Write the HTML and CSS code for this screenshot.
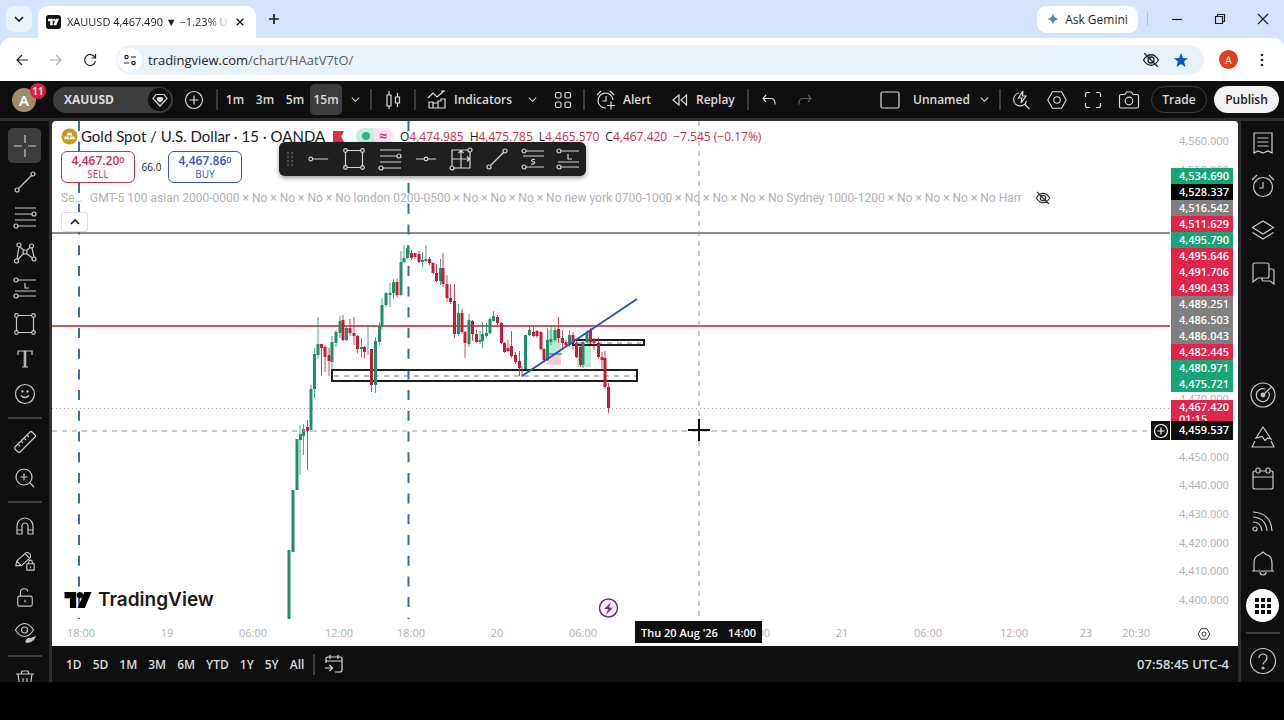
FILE: index.html
```html
<!DOCTYPE html>
<html lang="en">
<head>
<meta charset="utf-8">
<meta name="viewport" content="width=device-width, initial-scale=1">
<title>XAUUSD 4,467.490 ▼ −1.23% Unnamed</title>
<link rel="stylesheet" href="styles.css">
</head>
<body>
<svg class="sprite" aria-hidden="true">
  <symbol id="i-chev" viewBox="0 0 12 12"><path d="M2 4l4 4 4-4"/></symbol>
  <symbol id="i-trend" viewBox="0 0 24 24"><circle cx="4" cy="20" r="2"/><circle cx="20" cy="4" r="2"/><path d="M5.500 18.500L18.500 5.500"/></symbol>
  <symbol id="i-fib" viewBox="0 0 24 24"><path d="M2 3h21M2 9h17M2 15h21M5 21h18"/><circle cx="21" cy="9" r="2"/><circle cx="3" cy="21" r="2"/></symbol>
  <symbol id="i-rect" viewBox="0 0 24 24"><path d="M5 3.500h14M5 20.500h14M3.500 5v14M20.500 5v14"/><circle cx="3.500" cy="3.500" r="1.800"/><circle cx="20.500" cy="3.500" r="1.800"/><circle cx="3.500" cy="20.500" r="1.800"/><circle cx="20.500" cy="20.500" r="1.800"/></symbol>
  <symbol id="i-long" viewBox="0 0 24 24"><path d="M5 4h18M12 7v5h4M2 15h21M5 20h18"/><circle cx="3" cy="4" r="2"/><circle cx="3" cy="20" r="2"/></symbol>
  <symbol id="i-short" viewBox="0 0 24 24"><path d="M5 4h18M2 9h21M5 20h18M14 12.500c-4-1-4 2-2 2s3 3-2 2.500"/><circle cx="3" cy="4" r="2"/><circle cx="3" cy="20" r="2"/></symbol>
  <symbol id="i-eyeoff" viewBox="0 0 24 24"><path d="M2 12c3-5 7-7 10-7s7 2 10 7c-3 5-7 7-10 7s-7-2-10-7zM3 3l18 18"/><circle cx="12" cy="12" r="4"/></symbol>
  <symbol id="i-hex" viewBox="0 0 24 24"><path d="M7 3h10l5 9-5 9H7l-5-9z"/><circle cx="12" cy="12" r="3.500"/></symbol>
  <symbol id="i-tv" viewBox="0 0 30 20"><path d="M0 1h13v18H6V8H0z"/><circle cx="17" cy="4.500" r="3.500"/><path d="M22 1h8l-7.500 18h-8z"/></symbol>
</svg>

<header class="browser">
  <div class="tabs">
    <button class="tab-search" aria-label="Search tabs"><svg class="ic ic12 bold"><use href="#i-chev"/></svg></button>
    <div class="tab">
      <span class="favicon"><svg class="tv-fav"><use href="#i-tv"/></svg></span>
      <span class="tab-title">XAUUSD 4,467.490 ▼ −1.23% U</span>
      <button class="tab-close" aria-label="Close tab"><svg class="ic ic12 bold" viewBox="0 0 12 12"><path d="M2 2l8 8M10 2l-8 8"/></svg></button>
    </div>
    <button class="tab-new" aria-label="New tab"><svg class="ic ic12 bold" viewBox="0 0 12 12"><path d="M6 1v10M1 6h10"/></svg></button>
    <span class="spacer"></span>
    <button class="gemini"><svg class="spark" viewBox="0 0 14 14"><defs><linearGradient id="gm" x1="0" y1="0" x2="1" y2="1"><stop offset="0.200" stop-color="#d9506a"/><stop offset="0.500" stop-color="#4a7fe8"/><stop offset="0.850" stop-color="#35a06b"/></linearGradient></defs><path fill="url(#gm)" d="M7 0c.8 4.500 2.500 6.200 7 7-4.500.8-6.200 2.500-7 7-.8-4.500-2.500-6.200-7-7 4.500-.8 6.200-2.500 7-7z"/></svg>Ask Gemini</button>
    <span class="tab-sep"></span>
    <button class="win" aria-label="Minimize"><svg class="ic ic12" viewBox="0 0 12 12"><path d="M1 6.500h10"/></svg></button>
    <button class="win" aria-label="Restore"><svg class="ic ic12" viewBox="0 0 12 12"><path d="M1.500 3.500h7v7h-7zM3.500 3.500v-2h7v7h-2"/></svg></button>
    <button class="win" aria-label="Close"><svg class="ic ic12" viewBox="0 0 12 12"><path d="M1 1l10 10M11 1L1 11"/></svg></button>
  </div>
  <div class="nav">
    <button class="nav-btn" aria-label="Back"><svg class="ic ic14" viewBox="0 0 14 14"><path d="M13 7H2M7 2L2 7l5 5"/></svg></button>
    <button class="nav-btn dim" aria-label="Forward"><svg class="ic ic14" viewBox="0 0 14 14"><path d="M1 7h11M7 2l5 5-5 5"/></svg></button>
    <button class="nav-btn" aria-label="Reload"><svg class="ic ic14" viewBox="0 0 14 14"><path d="M12 4.500A5.500 5.500 0 1 0 12.500 8M12.500 1v4h-4"/></svg></button>
    <div class="address">
      <button class="site" aria-label="Site information"><svg class="ic ic14" viewBox="0 0 14 14"><path d="M8 4h5M1 10h5"/><circle cx="3.500" cy="4" r="1.700"/><circle cx="10.500" cy="10" r="1.700"/></svg></button>
      <a class="url" href="#">tradingview.com<span class="path">/chart/HAatV7tO/</span></a>
      <span class="spacer"></span>
      <button class="addr-btn" aria-label="Third-party cookies blocked"><svg class="ic ic18 bold"><use href="#i-eyeoff"/></svg></button>
      <button class="addr-btn" aria-label="Bookmark"><svg class="star" viewBox="0 0 14 14"><path d="M7 0l1.900 4.900L14 5.300l-3.900 3.300L11.400 14 7 11l-4.400 3 1.300-5.400L0 5.300l5.100-.4z"/></svg></button>
    </div>
    <button class="profile" aria-label="Profile">A</button>
    <button class="dots" aria-label="Menu"><svg class="ic14 solid" viewBox="0 0 14 14"><circle cx="7" cy="2" r="1.300"/><circle cx="7" cy="7" r="1.300"/><circle cx="7" cy="12" r="1.300"/></svg></button>
  </div>
</header>

<div class="app">
  <div class="topbar">
    <button class="avatar" aria-label="Account, 11 notifications"><span class="face">A</span><span class="badge">11</span></button>
    <button class="symbol">XAUUSD<span class="gem"><svg class="ic ic18" viewBox="0 0 18 18"><path d="M5 3.500h8l3 4-7 7.500-7-7.500z"/><path class="fill" d="M6.500 7q2-1 2.500 0 .5-1 2.500 0 1 1.500-2.500 4-3.500-2.500-2.500-4z"/></svg></span></button>
    <button class="plus" aria-label="Compare"><svg class="ic ic20" viewBox="0 0 20 20"><circle cx="10" cy="10" r="8.500"/><path d="M10 5.500v9M5.500 10h9"/></svg></button>
    <span class="sep"></span>
    <button class="tf">1m</button><button class="tf">3m</button><button class="tf">5m</button><button class="tf on">15m</button>
    <button class="chev" aria-label="Intervals"><svg class="ic ic12"><use href="#i-chev"/></svg></button>
    <span class="sep"></span>
    <button class="tool wide" aria-label="Candles"><svg class="ic ic20" viewBox="0 0 20 20"><path d="M4 5h4v11H4zM6 1v4M6 16v3M12.500 7h4v6h-4zM14.500 3v4M14.500 13v4"/></svg></button>
    <span class="sep"></span>
    <button class="labelled indicators"><svg class="ic ic20" viewBox="0 0 20 20"><path d="M1 8l5-5 4 4 7-6M14 1h4M2 18v-6h4v6M6 18v-4l1-1h4v5M11 18v-7h3v-2h4v9H2"/></svg>Indicators</button>
    <button class="chev" aria-label="Favorite indicators"><svg class="ic ic12"><use href="#i-chev"/></svg></button>
    <button class="tool" aria-label="Templates"><svg class="ic ic18" viewBox="0 0 18 18"><rect x="1.500" y="1.500" width="5.500" height="5.500" rx="1.500"/><rect x="11" y="1.500" width="5.500" height="5.500" rx="1.500"/><rect x="1.500" y="11" width="5.500" height="5.500" rx="1.500"/><rect x="11" y="11" width="5.500" height="5.500" rx="1.500"/></svg></button>
    <span class="sep"></span>
    <button class="labelled alert"><svg class="ic ic20" viewBox="0 0 20 20"><path d="M17 10a7.500 7.500 0 1 0-7 8M10 6v5H6.500M1 5l4-4M14 1l4 4M15 11.500v8M11 15.500h8"/></svg>Alert</button>
    <button class="labelled replay"><svg class="ic ic18" viewBox="0 0 18 18"><path d="M8 4v10L2 9zM15.500 4v10L10 9z"/></svg>Replay</button>
    <span class="sep"></span>
    <button class="tool" aria-label="Undo"><svg class="ic ic16" viewBox="0 0 16 16"><path d="M5 3L2 6.500 5 10M2 6.500h8q4 0 4 5v1"/></svg></button>
    <button class="tool faded" aria-label="Redo"><svg class="ic ic16" viewBox="0 0 16 16"><path d="M11 3l3 3.500-3 3.500M14 6.500H6q-4 0-4 5v1"/></svg></button>
    <span class="spacer"></span>
    <button class="labelled layout"><svg class="ic ic20" viewBox="0 0 20 20"><rect x="1" y="2" width="18" height="16" rx="1.500"/></svg>Unnamed</button>
    <button class="chev" aria-label="Layouts"><svg class="ic ic12"><use href="#i-chev"/></svg></button>
    <span class="sep"></span>
    <button class="tool" aria-label="Quick search"><svg class="ic ic20" viewBox="0 0 20 20"><path d="M8 3a6.500 6.500 0 1 0 7.500 8M14 14.500l4.500 4.500M12 1L7.500 8H11l-1 5 5-7h-3.500z"/></svg></button>
    <button class="tool" aria-label="Settings"><svg class="ic ic22"><use href="#i-hex"/></svg></button>
    <button class="tool" aria-label="Fullscreen"><svg class="ic ic18" viewBox="0 0 18 18"><path d="M1.500 6V3.500q0-2 2-2H6M12 1.500h2.500q2 0 2 2V6M16.500 12v2.500q0 2-2 2H12M6 16.500H3.500q-2 0-2-2V12"/></svg></button>
    <button class="tool" aria-label="Snapshot"><svg class="ic ic22" viewBox="0 0 22 22"><path d="M3 5.500h4l1.500-2.500h5L15 5.500h4q1.500 0 1.500 1.500v10.500q0 1.500-1.500 1.500H3q-1.500 0-1.500-1.500V7q0-1.500 1.500-1.500z"/><circle cx="11" cy="12" r="3.800"/></svg></button>
    <button class="pill trade">Trade</button>
    <button class="pill publish">Publish</button>
  </div>

  <nav class="side left" aria-label="Drawing tools">
    <div class="grp g8">
      <button class="active" aria-label="Cross"><svg class="ic ic24" viewBox="0 0 24 24"><path d="M12 1v8M12 15v8M1 12h8M15 12h8"/></svg></button>
      <button aria-label="Trend line"><svg class="ic ic24"><use href="#i-trend"/></svg></button>
      <button aria-label="Fib retracement"><svg class="ic ic24"><use href="#i-fib"/></svg></button>
      <button aria-label="Patterns"><svg class="ic ic24" viewBox="0 0 24 24"><circle cx="3.500" cy="20" r="2"/><circle cx="6" cy="4" r="2"/><circle cx="12" cy="11" r="2"/><circle cx="18.500" cy="5" r="2"/><circle cx="21" cy="18" r="2"/><path d="M4 18L6 6M7 6l4 3.500M13.500 9.500L17 6.500M19 7l2 9M5 18.500L10.500 12.500M13.500 12.500l6 4.500"/></svg></button>
      <button aria-label="Forecasting"><svg class="ic ic24"><use href="#i-long"/></svg></button>
      <button aria-label="Shapes"><svg class="ic ic24"><use href="#i-rect"/></svg></button>
      <button aria-label="Text"><svg class="ic ic20" viewBox="0 0 20 20"><path d="M3 6V2h14v4M7 18h6M9.300 2v16M10.700 2v16"/></svg></button>
      <button aria-label="Icons"><svg class="ic ic22" viewBox="0 0 22 22"><circle cx="11" cy="11" r="9.500"/><path d="M7 12.500q4 4 8 0"/><circle class="fill" cx="8.500" cy="8.500" r=".6"/><circle class="fill" cx="13.500" cy="8.500" r=".6"/></svg></button>
    </div>
    <span class="hr"></span>
    <div class="grp g2">
      <button aria-label="Measure"><svg class="ic ic24" viewBox="0 0 24 24"><path d="M2 17L17 2q1-1 2 0l3 3q1 1 0 2L7 22q-1 1-2 0l-3-3q-1-1 0-2zM5 14l2 2M8 11l2 2M11 8l2 2M14 5l2 2"/></svg></button>
      <button aria-label="Zoom in"><svg class="ic ic22" viewBox="0 0 22 22"><circle cx="10" cy="10" r="8"/><path d="M16 16l4 4M10 6.500v7M6.500 10h7"/></svg></button>
    </div>
    <span class="hr"></span>
    <div class="grp g4">
      <button aria-label="Magnet"><svg class="ic ic20" viewBox="0 0 20 20"><path d="M2 18V10a8 8 0 0 1 16 0v8h-5v-8a3 3 0 0 0-6 0v8zM2 14h5M13 14h5"/></svg></button>
      <button aria-label="Stay in drawing mode"><svg class="ic ic22" viewBox="0 0 24 24"><path d="M2 17l1-5L13 3q2-1 4 1t1 4L8 17zM3 12l5 5M12 4l5 5M14 15h8v7h-8zM16 15v-2q0-2 2-2t2 2v2M18 18v2"/></svg></button>
      <button aria-label="Lock drawings"><svg class="ic ic20" viewBox="0 0 22 22"><rect x="3" y="10" width="16" height="11" rx="2"/><path d="M6 10V6q0-4 4-4t4 3M11 14v3"/></svg></button>
      <button aria-label="Hide drawings"><svg class="ic ic22" viewBox="0 0 22 22"><path d="M1.500 9q4-6.500 9-6.500t9 6.500q-4 6.500-9 6.500T1.500 9z"/><circle cx="10.500" cy="9" r="3"/><path class="fill" d="M12 21q1-4 4-3.500t1 3q-2 1-5 .5zM18 17l3-1-2 3z"/></svg></button>
    </div>
    <span class="hr"></span>
    <div class="grp g1"><button aria-label="Remove"><svg class="ic ic22" viewBox="0 0 22 22"><path d="M2 5h18M7 5l1-3h6l1 3M4 5l2 15h10l2-15M9 9v7M13 9v7"/></svg></button></div>
  </nav>

  <main class="chart">
    <svg class="plot" role="img" aria-label="XAUUSD 15 minute candles">
      <g transform="translate(-52 -121)">
        <path class="grn-zone" d="M547 330h14v25h-14zM577 344h14v23h-14z"/><path class="red-zone" d="M547 355h14v10h-14z"/>
        <path class="level grey" d="M52 233H4000"/>
        <path class="session" d="M79 121V619M408.500 121V619"/>
        <path class="last" d="M52 408.500H4000"/>
        <path class="level red" d="M52 326H4000"/>
        <path class="box" d="M332 370h305v11H332zM573 340h71v5h-71z"/>
        <path class="mid" d="M334 376h302M577 343h64"/>
        <path class="wick up" d="M300 425V475M303.500 424V455M311 385V432M314.500 348V398M318 317V359M332 336V370M336 330V347M340 316V338M346.500 326V341M361.500 338V358M368 325V355M375.500 337V393M379.500 322V345M382 298V329M386 292V307M390 283V307M393.500 279V299M401 251V296M404 245V263M407.500 245V259M422.500 252V267M426 245V262M440.500 259V285M458.500 304V336M469 314V347M480 331V344M482.500 322V348M486.500 323V338M490 317V335M493.500 311V322M529.500 327V336M547.500 328V361M551 326V345M555 326V342M569.500 330V347M583 340V368M587 330V343"/>
        <path class="wick down" d="M307.500 420V470M321.500 344V376M325 345V372M329 348V376M343 315V341M350 319V336M354 317V345M357.500 335V353M364.500 346V358M371.500 349V392M397 279V297M411.500 250V260M415 253V259M419 251V263M429.500 257V265M433 262V274M436.500 264V282M443 253V287M447 275V302M450.500 284V304M454.500 284V338M462 309V334M465 331V358M472.500 320V341M476.500 330V343M497.500 315V325M501.500 322V344M504.500 342V353M508 340V352M511.500 331V358M515.500 352V364M519.500 351V376M522 366V377M533.500 327V337M537 330V338M541 331V350M544 348V361M558.500 317V343M562.500 330V348M566 340V347M573 332V350M576.500 341V358M580.500 345V367M590.500 328V344M594 338V350M598.500 338V359M602 352V370M605 351V389M608.500 383V413"/>
        <path class="body up" d="M289 550V619M293 490V552M297 439V490M300.500 434V440M303.500 429V436M311 389V430M314.500 354V389M318 344V355M332 342V362M336 332V343M340 321V333M346.500 328V340M361.500 347V349M375.500 341V385M379.500 327V342M382 305V327M386 293V305M390 293V295M393.500 282V293M401 262V295M404 258V262M407.500 248V258M422.500 260V262M426 259V261M440.500 268V281M458.500 313V334M469 320V344M480 340V342M482.500 334V341M486.500 333V336M490 319V333M493.500 316V321M525.500 335V369M529.500 330V335M547.500 340V360M551 339V342M555 330V340M569.500 335V345M583 342V365M587 332V342"/>
        <path class="body down" d="M307.500 427V431M321.500 344V348M325 347V357M329 355V361M343 320V340M350 328V333M354 333V336M357.500 336V349M364.500 347V352M371.500 349V385M397 282V295M411.500 253V258M415 253V257M419 254V262M429.500 259V263M433 263V273M436.500 273V281M443 268V284M447 284V298M450.500 298V302M454.500 301V334M462 313V332M465 332V343M472.500 321V334M476.500 334V342M497.500 317V323M501.500 323V343M504.500 343V352M508 348V351M511.500 346V356M515.500 355V362M519.500 361V368M533.500 332V336M537 331V336M541 332V349M544 349V360M558.500 329V338M562.500 338V343M566 342V345M573 335V343M576.500 343V357M580.500 347V365M590.500 330V342M594 340V343M598.500 343V357M602 357V360M605 358V387M608.500 387V408"/>
        <path class="trend" d="M522 376L637 299"/><path class="trend thin" d="M548 354h14"/>
        <path class="cross" d="M699 121V620M52 431H4000"/>
        <path class="cursor" d="M688 430h22M699 419v22"/>
        <circle class="event" cx="608.500" cy="608" r="9"/><path class="bolt" d="M611 602l-7 7h4l-2 6 7-7.500h-4z"/>
      </g>
    </svg>

    <section class="legend">
      <div class="row title-row">
        <svg class="coin" viewBox="0 0 18 18"><circle cx="9" cy="9" r="8.500"/><path d="M7 5h4l1.200 3H5.800zM4 9h4l1 3H3zM10 9h4l1 3H9z"/></svg>
        <h1>Gold Spot / U.S. Dollar · 15 · OANDA</h1>
        <svg class="flag" viewBox="0 0 12 12"><path d="M0 0h12L9 6l3 6H0z"/></svg>
        <span class="status"><i class="live"></i><b>≈</b></span>
        <p class="ohlc"><span>O<em>4,474.985</em></span><span>H<em>4,475.785</em></span><span>L<em>4,465.570</em></span><span>C<em>4,467.420</em></span><span><em>−7.545 (−0.17%)</em></span></p>
      </div>
      <div class="row quotes">
        <button class="quote sell"><b>4,467.20<sup>0</sup></b>SELL</button>
        <span class="spread">66.0</span>
        <button class="quote buy"><b>4,467.86<sup>0</sup></b>BUY</button>
      </div>
      <div class="row study"><span class="study-name">Se…</span><span class="inputs">GMT-5 100 asian 2000-0000 × No × No × No × No london 0200-0500 × No × No × No × No new york 0700-1000 × No × No × No × No Sydney 1000-1200 × No × No × No × No Harr</span><button class="eye" aria-label="Show indicator"><svg class="ic ic16 bold"><use href="#i-eyeoff"/></svg></button></div>
      <button class="collapse" aria-label="Hide legend"><svg class="ic ic12 bold" viewBox="0 0 12 12"><path d="M2 8l4-4 4 4"/></svg></button>
    </section>

    <div class="favbar" role="toolbar" aria-label="Favorite tools">
      <svg class="grip" viewBox="0 0 10 14"><path d="M2 1h2M6 1h2M2 5h2M6 5h2M2 9h2M6 9h2M2 13h2M6 13h2"/></svg>
      <button aria-label="Horizontal ray"><svg class="ic ic22" viewBox="0 0 24 24"><circle cx="3" cy="12" r="2"/><path d="M5 12h17"/></svg></button>
      <button aria-label="Rectangle"><svg class="ic ic24"><use href="#i-rect"/></svg></button>
      <button aria-label="Fib retracement"><svg class="ic ic24"><use href="#i-fib"/></svg></button>
      <button aria-label="Horizontal line"><svg class="ic ic22" viewBox="0 0 24 24"><circle cx="12" cy="12" r="2"/><path d="M1 12h9M14 12h9"/></svg></button>
      <button aria-label="Date and price range"><svg class="ic ic24" viewBox="0 0 24 24"><path d="M3 19V3h16M5 21h16V5M12 3v18M3 12h18M9.500 6L12 3.500 14.500 6M18 9.500l2.500 2.500-2.500 2.500"/><circle cx="21" cy="3" r="2"/><circle cx="3" cy="21" r="2"/></svg></button>
      <button aria-label="Trend line"><svg class="ic ic24"><use href="#i-trend"/></svg></button>
      <button aria-label="Short position"><svg class="ic ic24"><use href="#i-short"/></svg></button>
      <button aria-label="Long position"><svg class="ic ic24"><use href="#i-long"/></svg></button>
    </div>

    <div class="brand"><svg class="tv-logo"><use href="#i-tv"/></svg>TradingView</div>

    <aside class="prices">
      <svg class="scale"><g transform="translate(-1170 -121)"><text x="1179" y="145">4,560.000</text><text x="1179" y="174">4,550.000</text><text x="1179" y="403">4,470.000</text><text x="1179" y="461">4,450.000</text><text x="1179" y="489">4,440.000</text><text x="1179" y="518">4,430.000</text><text x="1179" y="547">4,420.000</text><text x="1179" y="575">4,410.000</text><text x="1179" y="604">4,400.000</text></g></svg>
      <ul class="tags">
        <li class="g">4,534.690</li><li class="k">4,528.337</li><li class="n">4,516.542</li><li class="r">4,511.629</li><li class="g">4,495.790</li><li class="r">4,495.646</li><li class="r">4,491.706</li><li class="r">4,490.433</li><li class="n">4,489.251</li><li class="n">4,486.503</li><li class="n">4,486.043</li><li class="r">4,482.445</li><li class="g">4,480.971</li><li class="g">4,475.721</li>
      </ul>
      <div class="last-tag">4,467.420<br>01:15</div>
      <div class="cursor-tag"><button aria-label="Add at 4,459.537"><svg class="ic ic16" viewBox="0 0 16 16"><circle cx="8" cy="8" r="6.500"/><path d="M8 4.500v7M4.500 8h7"/></svg></button><span>4,459.537</span></div>
    </aside>

    <div class="times">
      <svg class="scale"><g transform="translate(-52 -620)"><text x="81" y="636">18:00</text><text x="167" y="636">19</text><text x="253" y="636">06:00</text><text x="339" y="636">12:00</text><text x="411" y="636">18:00</text><text x="497" y="636">20</text><text x="583" y="636">06:00</text><text x="756" y="636">18:00</text><text x="842" y="636">21</text><text x="928" y="636">06:00</text><text x="1014" y="636">12:00</text><text x="1086" y="636">23</text><text x="1136" y="636">20:30</text></g></svg>
      <div class="time-tag"><span>Thu 20 Aug '26</span><span>14:00</span></div>
    </div>
    <button class="axis-settings" aria-label="Scale settings"><svg class="ic ic14 bold"><use href="#i-hex"/></svg></button>
  </main>

  <footer class="ranges">
    <button>1D</button><button>5D</button><button>1M</button><button>3M</button><button>6M</button><button>YTD</button><button>1Y</button><button>5Y</button><button>All</button>
    <span class="sep"></span>
    <button aria-label="Go to date"><svg class="ic ic20" viewBox="0 0 20 20"><path d="M2 9V5q0-2 2-2h12q2 0 2 2v11q0 2-2 2h-5M2 7h16M6 1v4M14 1v4M1 14h7M5.500 11l3 3-3 3"/></svg></button>
    <span class="spacer"></span>
    <button class="clock">07:58:45 UTC-4</button>
  </footer>

  <nav class="side right" aria-label="Panels">
    <div class="grp r4">
      <button aria-label="Watchlist"><svg class="ic ic24" viewBox="0 0 24 24"><path d="M3 2h18v20l-4-2-5 2-5-2-4 2zM6.500 7h11M6.500 11h11M6.500 15h11"/></svg></button>
      <button aria-label="Alerts"><svg class="ic ic24" viewBox="0 0 24 24"><circle cx="12" cy="13" r="9.500"/><path d="M12 8v6H8M1 6l5-5M18 1l5 5"/></svg></button>
      <button aria-label="Object tree"><svg class="ic ic24" viewBox="0 0 24 24"><path d="M12 3l10.500 6.500L12 16 1.500 9.500zM1.500 14.500L12 21l10.500-6.500"/></svg></button>
      <button aria-label="Chats"><svg class="ic ic24" viewBox="0 0 24 24"><path d="M4 2h12q2 0 2 2v11q0 2-2 2H7l-5 4V4q0-2 2-2zM18 8h3q2 0 2 2v13l-4-3h-7q-1 0-1-3"/></svg></button>
    </div>
    <span class="spacer"></span>
    <div class="grp r6">
      <button aria-label="Screeners"><svg class="ic ic26" viewBox="0 0 26 26"><circle cx="13" cy="13" r="12"/><path d="M18.500 10A6.500 6.500 0 1 1 15 7M13 13l8.500-8"/><circle class="fill" cx="13" cy="13" r="1.800"/></svg></button>
      <button aria-label="Pine"><svg class="ic ic24" viewBox="0 0 24 24"><path d="M12 2l8 12-3.500-1-2.500 2.500-3-4-6 1.500zM4 16l-3 6h22l-3-6"/></svg></button>
      <button aria-label="Calendar"><svg class="ic ic24" viewBox="0 0 24 24"><path d="M5 4H4q-2 0-2 2v14q0 2 2 2h16q2 0 2-2V6q0-2-2-2h-1M9 4h6M2 10h20"/><rect x="5" y="1" width="4" height="5" rx="1.500"/><rect x="15" y="1" width="4" height="5" rx="1.500"/></svg></button>
      <button aria-label="News"><svg class="ic ic24" viewBox="0 0 24 24"><circle cx="4" cy="20" r="2"/><path d="M2 13q8 0 9 9M2 8q13 1 14 14M2 3q18 1 19 19"/></svg></button>
      <button aria-label="Notifications"><svg class="ic ic26" viewBox="0 0 26 26"><path d="M4 21V13q0-7 6-8.500l3-2.500 3 2.500q6 1.500 6 8.500v8M2 21h22M10 22q0 3 3 3t3-3"/></svg></button>
      <button class="apps" aria-label="Products"><svg viewBox="0 0 24 24"><path d="M4 4h4v4H4zM10 4h4v4h-4zM16 4h4v4h-4zM4 10h4v4H4zM10 10h4v4h-4zM16 10h4v4h-4zM4 16h4v4H4zM10 16h4v4h-4zM16 16h4v4h-4z"/></svg></button>
    </div>
    <span class="hr"></span>
    <div class="grp r1"><button aria-label="Help"><svg class="ic ic28" viewBox="0 0 28 28"><circle cx="14" cy="14" r="12.500"/><path d="M10 11q0-4 4-4t4 4q0 2-2 3.500t-2 3"/><circle cx="14" cy="21" r="1"/></svg></button></div>
  </nav>
</div>
</body>
</html>
```

FILE: styles.css
```css
* { box-sizing: border-box; }
body {
  margin: 0;
  min-height: 100vh;
  display: flex;
  flex-direction: column;
  background: #000;
  font-family: "Open Sans", "Noto Sans", sans-serif;
  font-size: 12px;
}
button {
  display: flex;
  align-items: center;
  justify-content: center;
  flex: none;
  margin: 0;
  padding: 0;
  border: 0;
  background: none;
  color: inherit;
  font: inherit;
  white-space: nowrap;
}
ul, p, h1 { margin: 0; padding: 0; }
.sprite { position: absolute; width: 0; height: 0; }
.spacer { flex: 1; }

.ic { fill: none; stroke: currentColor; stroke-width: 1.2; flex: none; }
.ic .fill, .solid { fill: currentColor; }
.bold { stroke-width: 1.7; }
.ic12 { width: 12px; height: 12px; }
.ic14 { width: 14px; height: 14px; }
.ic16 { width: 16px; height: 16px; }
.ic18 { width: 18px; height: 18px; }
.ic20 { width: 20px; height: 20px; }
.ic22 { width: 22px; height: 22px; }
.ic24 { width: 24px; height: 24px; }
.ic26 { width: 26px; height: 26px; }
.ic28 { width: 28px; height: 28px; }

/* Browser window */
.browser { background: #d3e3fd; color: #1f1f1f; }
.tabs { display: flex; align-items: center; height: 38px; padding-left: 6px; }
.tab-search { width: 26px; height: 26px; border-radius: 8px; background: #e8f4fc; }
.tab {
  display: flex;
  align-items: center;
  align-self: flex-end;
  width: 218px;
  height: 32px;
  margin-left: 6px;
  padding: 0 8px;
  border-radius: 10px 10px 0 0;
  background: #fff;
}
.favicon { display: flex; align-items: center; justify-content: center; width: 15px; height: 14px; border-radius: 3px; background: #111; }
.tv-fav { width: 11px; height: 8px; fill: #fff; }
.tab-title {
  flex: 1;
  margin-left: 6px;
  overflow: hidden;
  white-space: nowrap;
  font-size: 11px;
  line-height: 16px;
  -webkit-mask-image: linear-gradient(90deg, #000 142px, transparent 164px);
  mask-image: linear-gradient(90deg, #000 142px, transparent 164px);
}
.tab-close { width: 16px; height: 24px; }
.tab-close .ic { width: 10px; height: 10px; }
.tab-new { width: 36px; height: 28px; }
.gemini { gap: 6px; width: 101px; height: 27px; border-radius: 9px; background: #fff; }
.spark { width: 12px; height: 12px; }
.tab-sep { width: 1px; height: 14px; margin: 0 7px 0 9px; background: #a9bfe0; }
.win { width: 43px; height: 30px; }
.nav { display: flex; align-items: center; height: 43px; padding: 0 5px; border-radius: 10px 10px 0 0; background: #fff; }
.nav-btn { width: 34px; height: 30px; }
.dim { color: #a9abae; }
.address { display: flex; flex: 1; align-items: center; height: 30px; margin: 0 15px 0 9px; padding: 0 8px 0 2px; border-radius: 15px; background: #e9f1fb; }
.site { width: 24px; height: 24px; border-radius: 50%; background: #fff; }
.url { margin-left: 6px; color: #1f1f1f; font-size: 13px; line-height: 20px; text-decoration: none; }
.path { color: #5a5e63; }
.addr-btn { width: 30px; height: 28px; }
.star { width: 14px; height: 14px; fill: #0b57d0; }
.profile { width: 19px; height: 19px; border-radius: 50%; background: #df401f; color: #fff; font-size: 10px; }
.dots { width: 34px; height: 30px; margin-left: 7px; }

/* Application frame */
.app {
  display: grid;
  grid-template-columns: 49px minmax(0, 1fr) 43px;
  grid-template-rows: 37px minmax(0, 1fr) 36px;
  column-gap: 3px;
  flex: 1;
  min-height: 0;
  max-height: calc(100vh - 119px);
  margin-bottom: 38px;
  background: #2e2e2e;
  color: #dbdbdb;
  font-weight: 600;
}
.topbar { grid-column: 1 / -1; display: flex; align-items: center; padding-right: 5px; background: #0f0f0f; }
.topbar .sep { width: 2px; height: 21px; margin: 0 2px; background: #3d3d3d; }
.avatar { position: relative; width: 48px; height: 37px; }
.face { width: 24px; height: 24px; border-radius: 50%; background: #a08d68; color: #fff; font-size: 15px; line-height: 24px; }
.badge { position: absolute; top: 2px; left: 30px; width: 16px; height: 16px; border-radius: 50%; background: #d8203f; color: #fff; font-size: 10px; line-height: 16px; }
.symbol { justify-content: space-between; width: 120px; height: 26px; margin-left: 5px; padding: 0 2px 0 11px; border-radius: 13px; background: #3d3d3d; font-weight: 700; }
.gem { display: flex; align-items: center; justify-content: center; width: 23px; height: 23px; border-radius: 50%; background: #0f0f0f; }
.plus { width: 41px; height: 32px; }
.tf { width: 30px; height: 31px; border-radius: 5px; }
.tf.on { width: 32px; background: #3d3d3d; }
.chev { width: 26px; height: 31px; }
.chev .ic { width: 11px; height: 11px; }
.tool { width: 36px; height: 32px; }
.wide { width: 38px; }
.labelled { justify-content: flex-start; gap: 7px; height: 32px; padding-left: 9px; }
.indicators { width: 101px; }
.alert { width: 75px; }
.replay { width: 83px; }
.layout { gap: 13px; width: 93px; padding-left: 2px; }
.faded { color: #5c5c5c; }
.pill { height: 27px; border-radius: 14px; }
.trade { width: 56px; margin: 0 7px 0 4px; border: 1px solid #3d3d3d; }
.publish { width: 65px; background: #f2f2f2; color: #1a1a1a; }

.side { display: flex; flex-direction: column; grid-row: 2 / 4; min-height: 0; overflow: hidden; border-top: 3px solid #2e2e2e; background: #0f0f0f; color: #c8c8c8; }
.left { grid-column: 1; padding-top: 6px; }
.right { grid-column: 3; }
.grp { display: flex; flex: none; flex-direction: column; align-items: center; }
.grp button { flex: 1; width: 100%; min-height: 0; }
.g8 { height: 285px; }
.g2 { height: 72px; }
.g4 { height: 142px; }
.g1 { height: 36px; }
.r4 { height: 174px; }
.r6 { height: 253px; }
.r1 { height: 43px; }
.grp .active { width: 33px; margin: 1px 0; border-radius: 5px; background: #3d3d3d; }
.hr { flex: none; width: 34px; height: 2px; margin: 5px auto; background: #3d3d3d; }
.grp .apps { flex: none; width: 33px; height: 33px; margin: 5px 0; border-radius: 50%; background: #fff; color: #111; }
.apps svg { width: 24px; height: 24px; fill: #111; }

/* Chart */
.chart {
  position: relative;
  display: grid;
  grid-column: 2;
  grid-row: 2;
  grid-template-columns: minmax(0, 1fr) 68px;
  grid-template-rows: minmax(0, 1fr) 25px;
  margin-top: 3px;
  overflow: hidden;
  border-radius: 4px 4px 0 0;
  background: #fff;
  color: #1a1a1a;
  font-weight: 400;
}
.plot { width: 100%; height: 100%; overflow: hidden; fill: none; }
.grn-zone { fill: #b8ead4; }
.red-zone { fill: #f9c8d0; }
.level { stroke-width: 1.5; }
.grey { stroke: #666; }
.red { stroke: #c4182f; }
.session { stroke: #3f6a9c; stroke-width: 2; stroke-dasharray: 10 10.7; }
.last { stroke: #b9a3a8; stroke-dasharray: 1 3; }
.box { stroke: #1c1c1c; stroke-width: 2; }
.mid { stroke: #777; stroke-dasharray: 5 5; }
.wick { stroke-width: 1; opacity: 0.8; }
.body { stroke-width: 3; }
.up { stroke: #1c9068; }
.down { stroke: #c81a36; }
.trend { stroke: #2b50c4; stroke-width: 2; }
.thin { stroke-width: 1; }
.cross { stroke: #999; stroke-dasharray: 5 5; }
.cursor { stroke: #111; stroke-width: 2; }
.event { stroke: #7b1f8f; stroke-width: 1.5; }
.bolt { fill: #8e24aa; }

.legend { position: absolute; top: 4px; left: 9px; right: 170px; }
.row { display: flex; align-items: center; }
.title-row { height: 22px; white-space: nowrap; }
.coin { width: 17px; height: 17px; fill: #c69a1c; }
.coin path { fill: #fff; }
.legend h1 { width: 242px; margin-left: 3px; font-family: Lato, sans-serif; font-size: 15px; font-weight: 400; }
.flag { width: 11px; height: 11px; margin-left: 10px; fill: #e0314b; }
.status { display: flex; align-items: center; justify-content: space-between; width: 37px; height: 16px; margin: 0 7px 0 12px; padding: 0 6px; border-radius: 8px; background: linear-gradient(90deg, #c3f0df 50%, #fde4f0 50%); color: #d62a80; font-size: 14px; line-height: 16px; }
.live { width: 8px; height: 8px; border-radius: 50%; background: #2bb58a; }
.ohlc { display: flex; gap: 6px; }
.ohlc em { color: #cc2f4c; font-style: normal; }
.quotes { margin-top: 4px; }
.quote { flex-direction: column; width: 74px; height: 32px; border: 1px solid; border-radius: 6px; background: #fff; font-size: 10px; line-height: 13px; }
.quote b { font-size: 12px; line-height: 15px; font-weight: 600; }
.quote sup { font-size: 9px; line-height: 9px; vertical-align: 2px; }
.sell { color: #cc2f4c; }
.buy { color: #3355c8; }
.spread { width: 33px; text-align: center; font-size: 10px; }
.study { height: 20px; margin-top: 5px; color: #b2b2b2; font-family: Roboto, sans-serif; white-space: nowrap; }
.study-name { flex: none; width: 29px; }
.inputs { flex: 1; max-width: 940px; overflow: hidden; }
.eye { width: 26px; height: 20px; color: #333; }
.collapse { width: 27px; height: 20px; margin-top: 4px; border: 1px solid #e0e0e0; border-radius: 3px; background: #fff; }

.favbar { position: absolute; top: 21px; left: 227px; display: flex; align-items: center; width: 307px; height: 34px; border-radius: 6px; background: #1f1f1f; color: #d4d4d4; box-shadow: 0 2px 4px rgba(0, 0, 0, 0.4); }
.favbar button { flex: 1; height: 34px; }
.grip { width: 10px; height: 14px; margin: 0 6px; stroke: #4a4a4a; stroke-width: 2; }
.brand { position: absolute; bottom: 33px; left: 12px; display: flex; align-items: center; gap: 6px; font-family: Inter, sans-serif; font-size: 19px; font-weight: 600; line-height: 26px; }
.tv-logo { width: 28px; height: 18px; }

.prices { position: relative; }
.scale { display: block; width: 100%; height: 100%; overflow: hidden; fill: #b0b0b0; font-size: 11px; }
.tags { position: absolute; top: 47px; left: 1px; width: 62px; list-style: none; }
.tags li, .last-tag, .cursor-tag span { height: 16px; padding-left: 8px; color: #fff; font-size: 11px; font-weight: 600; line-height: 16px; }
.g { background: #17a578; }
.k { background: #000; }
.n { background: #808080; }
.r { background: #e0244a; }
.tags + .last-tag { position: absolute; top: 279px; left: 1px; width: 62px; height: 26px; padding-top: 1px; background: #e0244a; line-height: 12px; }
.cursor-tag { position: absolute; top: 300px; left: -19px; display: flex; align-items: center; gap: 1px; height: 19px; }
.cursor-tag button { width: 19px; height: 19px; background: #0f0f0f; color: #fff; }
.cursor-tag span { width: 62px; height: 19px; background: #0f0f0f; line-height: 18px; }
.times { position: relative; }
.times text { text-anchor: middle; }
.time-tag { position: absolute; top: 0; left: 583px; display: flex; align-items: center; justify-content: center; gap: 10px; width: 127px; height: 22px; padding-top: 1px; background: #0f0f0f; color: #fff; font-size: 11px; font-weight: 600; }
.axis-settings { height: 25px; color: #333; }

.ranges { grid-column: 2; grid-row: 3; display: flex; align-items: center; gap: 11px; padding: 0 9px 0 14px; background: #0f0f0f; }
.ranges .sep { width: 2px; height: 21px; margin: 0 -2px; background: #3d3d3d; }
.ranges .clock { font-size: 13px; }
```
